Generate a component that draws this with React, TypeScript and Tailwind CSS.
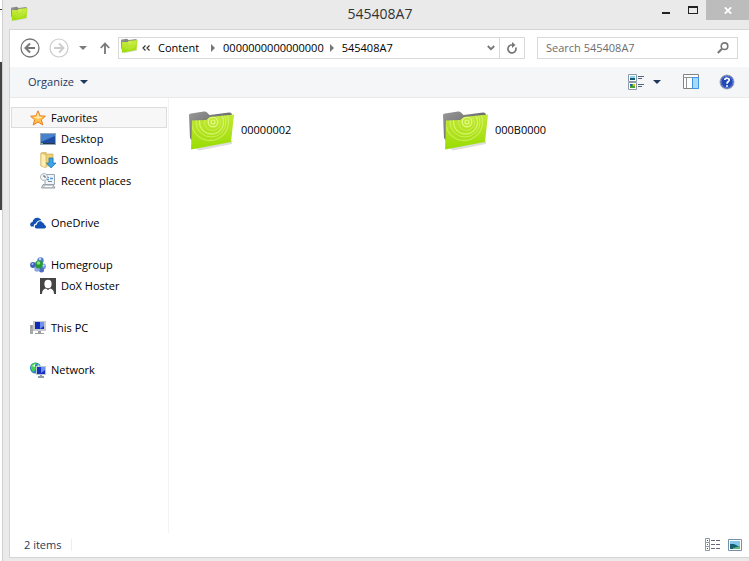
import React, { useId } from 'react'
import { clsx } from 'clsx'

function FolderIcon({ className }: { className?: string }) {
  const id = useId()
  return (
    <svg viewBox="0 0 46 42" className={className} aria-hidden="true">
      <defs>
        <linearGradient id={`${id}-green`} x1="0" y1="0" x2="0" y2="1">
          <stop offset="0" stopColor="#c0e935" />
          <stop offset="0.5" stopColor="#b0e21c" />
          <stop offset="1" stopColor="#98dc04" />
        </linearGradient>
        <linearGradient id={`${id}-grey`} x1="0" y1="0" x2="1" y2="1">
          <stop offset="0" stopColor="#9a9a9a" />
          <stop offset="0.5" stopColor="#707070" />
          <stop offset="1" stopColor="#858585" />
        </linearGradient>
        <clipPath id={`${id}-front`}>
          <path d="M3 10.500 17 10 21 7 45 4.500 42 32 2 39.500Z" />
        </clipPath>
      </defs>
      <path d="M6 38 43 31 43 34 10 40.500Z" fill="#dddddd" />
      <path d="M0 5Q0 3.500 2 3.500L15 1.500Q17 1.300 18 2.500L20.500 5 40 2.500Q42.500 2.300 43 4.500L42 20 4 32 1 28Z" fill={`url(#${id}-grey)`} />
      <path d="M3 10.500 17 10 21 7 45 4.500 42 32 2 39.500Z" fill={`url(#${id}-green)`} />
      <g clipPath={`url(#${id}-front)`} fill="none" stroke="#e6fa88">
        <circle cx="24" cy="12" r="2" strokeWidth="1.200" />
        <circle cx="24" cy="12" r="4.800" strokeWidth="1.400" opacity="0.9" />
        <circle cx="23.500" cy="12.500" r="8" opacity="0.500" />
        <circle cx="22.500" cy="12" r="12" strokeWidth="1.300" opacity="0.700" />
        <circle cx="22" cy="12" r="15" opacity="0.600" />
        <circle cx="21" cy="12" r="18.500" strokeWidth="1.300" opacity="0.500" />
      </g>
    </svg>
  )
}

function StarIcon() {
  return (
    <svg viewBox="0 0 16 16" className="size-4">
      <path d="M8 .8 10 5.800 15.400 6.200 11.300 9.800 12.800 15 8 12 3.200 15 4.600 9.800.6 6.200 6 5.800Z" fill="#ffc04c" stroke="#ec7d22" strokeLinejoin="round" />
      <path d="M8 2.500 9.300 6.500 13 7 8 9 3 7 6.700 6.500Z" fill="#ffe6a2" />
    </svg>
  )
}

function DesktopIcon() {
  return (
    <svg viewBox="0 0 16 16" className="size-4">
      <path d="M0 2H16V14H0Z" fill="#98a8bd" />
      <path d="M1 3H15V12H1Z" fill="#1c4da3" />
      <path d="M1 3H15V5L1 11Z" fill="#4a81cc" />
      <path d="M1 12H15V13H1Z" fill="#26394f" />
      <path d="M1 12H3V13H1Z" fill="#7cc47d" />
    </svg>
  )
}

function DownloadsIcon() {
  return (
    <svg viewBox="0 0 16 16" className="size-4">
      <path d="M1 1 6 0V2H13V14H1Z" fill="#edcf75" stroke="#cfa94c" strokeWidth=".7" />
      <path d="M1 1 6 3V16L1 14Z" fill="#ffefb0" stroke="#d2b05a" strokeWidth=".7" />
      <path d="M9 6H13V11H16L11 16 6.500 11H9Z" fill="#3ba4ea" stroke="#1670b5" strokeWidth=".7" />
    </svg>
  )
}

function RecentIcon() {
  return (
    <svg viewBox="0 0 16 16" className="size-4">
      <path d="M5 1.500H14.500V11.500H5Z" fill="#eef4fa" stroke="#9aa5ae" />
      <path d="M7 4.500H9M8 8.500H12" stroke="#7c8b98" />
      <path d="M7 6.500H9M10 5.500H13" stroke="#4aa0e2" strokeWidth="1.500" />
      <path d="M3 11.500H13L15 15H1.500Z" fill="#c8ced3" stroke="#9aa2a9" />
      <path d="M5 13.500H12" stroke="#fff" />
      <circle cx="4" cy="4" r="3.500" fill="#f6f8fa" stroke="#adb5bb" />
      <path d="M4 2V4H6" fill="none" stroke="#53606b" />
    </svg>
  )
}

function OneDriveIcon() {
  return (
    <svg viewBox="0 0 16 16" className="size-4" fill="#1151b4">
      <path d="M1 11.500C-.5 10 0 7.500 2.500 7 3 4 6 2 9 3.200 10 3.500 11 4.400 11.400 5.300 8.500 5 6.400 6.500 6 8.500 4 8.800 3.500 10.500 4 11.500Z" />
      <path d="M6.500 13.500C4.200 13.500 4.200 9.800 7 9.600 7 6 11.500 5 13 8.300 14 8.200 14.500 8.900 14.400 10 16.600 10.300 16.500 13.500 14.200 13.500Z" />
    </svg>
  )
}

function HomegroupIcon() {
  return (
    <svg viewBox="0 0 16 16" className="size-4">
      <circle cx="10.500" cy="3.500" r="3.200" fill="#547fd1" />
      <circle cx="3" cy="8" r="2.900" fill="#4061bd" />
      <circle cx="13" cy="9.500" r="2.900" fill="#7199de" />
      <circle cx="11.500" cy="13" r="2.500" fill="#4a6cc4" />
      <circle cx="7" cy="12" r="2.700" fill="#8ba8e4" />
      <circle cx="9" cy="7.500" r="4" fill="#259a35" />
      <circle cx="8.500" cy="6" r="1.800" fill="#8fdc8b" />
      <circle cx="10" cy="2" r="1.200" fill="#c6dbfa" />
      <circle cx="2.500" cy="7" r="1" fill="#a9c3f4" />
      <circle cx="13.500" cy="8.500" r="1" fill="#d4e5ff" />
    </svg>
  )
}

function UserIcon() {
  return (
    <svg viewBox="0 0 16 16" className="size-4">
      <path d="M0 0H16V16H0Z" fill="#454545" />
      <path d="M2 16Q2 11 6 10.500L8 12 10 10.500Q14 11 14 16Z" fill="#fff" />
      <ellipse cx="8" cy="6" rx="3.600" ry="4.200" fill="#fff" />
    </svg>
  )
}

function ComputerIcon() {
  return (
    <svg viewBox="0 0 16 16" className="size-4">
      <path d="M0 5H3V14H0Z" fill="#a3aaa9" />
      <path d="M1 6H2V8H1Z" fill="#43bd55" />
      <path d="M3 1H16V11H3Z" fill="#c6cace" />
      <path d="M5 2H14V9H5Z" fill="#1229b5" />
      <path d="M10 2H14V6L10 9Z" fill="#6e91ef" />
      <path d="M8 11H11V13H14V14H5V13H8Z" fill="#999f9f" />
    </svg>
  )
}

function NetworkIcon() {
  return (
    <svg viewBox="0 0 16 16" className="size-4">
      <circle cx="5.500" cy="6" r="5.500" fill="#2385bf" />
      <path d="M1 4Q3 0 7 1L5 4 6 7 3 10 1 7Z" fill="#46cf52" />
      <path d="M8 2 10 4 7 5Z" fill="#a8e7c0" />
      <path d="M2 4 5 2V5Z" fill="#d6f9db" />
      <path d="M6 4H16V13H6Z" fill="#bcc9d2" />
      <path d="M7 5H15V12H7Z" fill="#1730bd" />
      <path d="M11 5H15V8L11 11Z" fill="#6a91f0" />
      <path d="M10 13H12V14H14V16H8V14H10Z" fill="#8d9ca8" />
    </svg>
  )
}

function CaretDown({ className }: { className?: string }) {
  return (
    <svg viewBox="0 0 8 4" className={clsx('h-1 w-2 shrink-0', className)} aria-hidden="true">
      <path d="M0 0H8L4 4Z" fill="currentColor" />
    </svg>
  )
}

function CaretRight() {
  return (
    <svg viewBox="0 0 4 8" className="h-2 w-1 shrink-0 text-[#777777]" aria-hidden="true">
      <path d="M0 0 4 4 0 8Z" fill="currentColor" />
    </svg>
  )
}

function TitleBar() {
  return (
    <header className="flex h-[29px] items-start justify-between">
      <FolderIcon className="mt-1.5 ml-0.5 h-4 w-[17px]" />
      <h1 className="flex-1 pt-1 pl-[82px] text-center text-sm leading-5 text-[#333333]">545408A7</h1>
      <div className="flex h-5">
        <button aria-label="Minimize" className="flex w-7 items-center justify-center pl-1">
          <svg viewBox="0 0 10 10" className="size-2.5"><path d="M1 7H9V9H1Z" fill="#222" /></svg>
        </button>
        <button aria-label="Maximize" className="flex w-7 items-center justify-center pl-0.5">
          <svg viewBox="0 0 10 8" className="h-2 w-2.5"><path d="M0 0H10V8H0ZM1 2V7H9V2Z" fill="#222" fillRule="evenodd" /></svg>
        </button>
        <button aria-label="Close" className="flex w-[43px] items-center justify-center bg-[#bcbcbc]">
          <svg viewBox="0 0 8 7" className="h-[7px] w-2"><path d="M.8.3 7.200 6.700M7.200.3.8 6.700" stroke="#fff" strokeWidth="1.700" /></svg>
        </button>
      </div>
    </header>
  )
}

function AddressBar() {
  return (
    <div className="flex h-[37px] items-center pr-[11px] pb-px pl-2.5">
      <button aria-label="Back" className="text-[#777777]">
        <svg viewBox="0 0 20 20" className="size-5" fill="none" stroke="currentColor">
          <circle cx="10" cy="10" r="9" strokeWidth="1.300" />
          <path d="M15 10H6M10 5.500 5.500 10 10 14.500" strokeWidth="2" />
        </svg>
      </button>
      <button aria-label="Forward" className="ml-[9px] text-[#cccccc]">
        <svg viewBox="0 0 20 20" className="size-5" fill="none" stroke="currentColor">
          <circle cx="10" cy="10" r="9" strokeWidth="1.200" />
          <path d="M5 10H14M10 5.500 14.500 10 10 14.500" strokeWidth="1.800" />
        </svg>
      </button>
      <button aria-label="Recent locations" className="ml-2.5"><CaretDown className="text-[#7b7b7b]" /></button>
      <button aria-label="Up" className="ml-3 text-[#777777]">
        <svg viewBox="0 0 12 12" className="size-3" fill="none" stroke="currentColor" strokeWidth="1.800">
          <path d="M6 12V2M1.800 6 6 1.500 10.200 6" />
        </svg>
      </button>
      <div className="ml-[7px] flex h-[22px] min-w-0 flex-1 items-center border border-[#d9d9d9]">
        <nav aria-label="Address" className="flex min-w-0 flex-1 items-center pl-0.5 whitespace-nowrap">
          <FolderIcon className="mb-1 h-4 w-[17px] shrink-0" />
          <svg viewBox="0 0 8 6" className="ml-1 h-1.5 w-2 shrink-0" fill="none" stroke="#333" strokeWidth="1.200">
            <path d="M3.500.5 1 3 3.500 5.500M7.500.5 5 3 7.500 5.500" />
          </svg>
          <a href="#content" className="mr-3 ml-2">Content</a>
          <CaretRight />
          <a href="#0000000000000000" className="mr-1.5 ml-2">0000000000000000</a>
          <CaretRight />
          <a href="#545408A7" className="ml-2">545408A7</a>
        </nav>
        <button aria-label="Previous locations" className="px-1 text-[#777777]">
          <svg viewBox="0 0 8 6" className="h-1.5 w-2" fill="none" stroke="currentColor" strokeWidth="1.800"><path d="M.8 1 4 4.200 7.200 1" /></svg>
        </button>
        <button aria-label="Refresh" className="flex h-full w-[25px] items-center justify-center border-l border-[#d9d9d9] text-[#777777]">
          <svg viewBox="0 0 12 12" className="size-3" fill="none" stroke="currentColor" strokeWidth="1.700">
            <path d="M6 3H5A4 4 0 1 0 9.700 5.500" />
            <path d="M6 0 9.500 3 6 6Z" fill="currentColor" stroke="none" />
          </svg>
        </button>
      </div>
      <label className="ml-3 flex h-[22px] w-[28%] items-center border border-[#d9d9d9] px-2">
        <input type="search" aria-label="Search 545408A7" placeholder="Search 545408A7" className="min-w-0 flex-1 outline-none placeholder:text-[#6d6d6d]" />
        <svg viewBox="0 0 12 12" className="size-3 text-[#777777]" fill="none" stroke="currentColor">
          <circle cx="7.500" cy="4.200" r="3.300" strokeWidth="1.600" />
          <path d="M5 6.800.8 11" strokeWidth="2" />
        </svg>
      </label>
    </div>
  )
}

function CommandBar() {
  return (
    <div className="flex h-[31px] items-center border-b border-[#e8e9eb] bg-[#f4f6f8] pr-3.5 pl-[18px] text-[#1e395b]">
      <button className="flex items-center gap-1.5">Organize <CaretDown /></button>
      <button aria-label="Change view" className="ml-auto">
        <svg viewBox="0 0 16 16" className="size-4">
          <path d="M.5.5H8.500V7.500H.5ZM.5 8.500H8.500V15.500H.5Z" fill="#fff" stroke="#8a9aac" />
          <path d="M2 2H7V4H2Z" fill="#8dd4f4" /><path d="M2 4H7V6H2Z" fill="#155d72" />
          <path d="M2 10H7V14H2Z" fill="#4c9e31" /><path d="M2 10H4V12H2Z" fill="#245abc" /><path d="M5 10H7V12H5Z" fill="#d5c12b" />
          <path d="M10 2.500H16M10 4.500H14M10 10.500H16M10 12.500H14" stroke="#53657d" />
        </svg>
      </button>
      <button aria-label="More view options" className="ml-[9px]"><CaretDown /></button>
      <button aria-label="Preview pane" className="ml-[22px]">
        <svg viewBox="0 0 16 16" className="size-4">
          <path d="M.5.5H15.500V14.500H.5Z" fill="#fff" stroke="#838383" />
          <path d="M0 3.500H16M3.500 3V14" stroke="#929292" />
          <path d="M9.500 3.500H15.500V14.500H9.500Z" fill="#a9d9fa" stroke="#3e95e5" />
        </svg>
      </button>
      <button aria-label="Help" className="ml-5">
        <svg viewBox="0 0 16 16" className="size-4">
          <circle cx="8" cy="8" r="7" fill="#2146b5" stroke="#a4a8b2" />
          <circle cx="8" cy="8" r="5.800" fill="none" stroke="#5578d5" />
          <path d="M5.800 6C6 3.500 10.500 3.700 10.200 6.200 10 7.500 8 7.700 8 9.700" fill="none" stroke="#fff" strokeWidth="1.700" />
          <circle cx="8" cy="12" r="1" fill="#fff" />
        </svg>
      </button>
    </div>
  )
}

interface TreeItem {
  label: string
  Icon: () => React.JSX.Element
  child?: boolean
  selected?: boolean
}

const TREE: TreeItem[][] = [
  [
    { label: 'Favorites', Icon: StarIcon, selected: true },
    { label: 'Desktop', Icon: DesktopIcon, child: true },
    { label: 'Downloads', Icon: DownloadsIcon, child: true },
    { label: 'Recent places', Icon: RecentIcon, child: true },
  ],
  [{ label: 'OneDrive', Icon: OneDriveIcon }],
  [
    { label: 'Homegroup', Icon: HomegroupIcon },
    { label: 'DoX Hoster', Icon: UserIcon, child: true },
  ],
  [{ label: 'This PC', Icon: ComputerIcon }],
  [{ label: 'Network', Icon: NetworkIcon }],
]

function Sidebar() {
  return (
    <nav aria-label="Locations" className="flex w-[159px] shrink-0 flex-col gap-[21px] border-r border-[#f3f3f3] pt-[9px] pr-px pl-px">
      {TREE.map((group) => (
        <ul key={group[0].label}>
          {group.map(({ label, Icon, child, selected }) => (
            <li key={label}>
              <a
                href={`#${label}`}
                className={clsx(
                  'flex h-[21px] items-center gap-[5px] border',
                  child ? 'pl-7' : 'pl-[18px]',
                  selected ? 'border-[#dcdcdc] bg-[#f7f7f7]' : 'border-transparent',
                )}
              >
                <Icon />
                {label}
              </a>
            </li>
          ))}
        </ul>
      ))}
    </nav>
  )
}

const FOLDERS = ['00000002', '000B0000']

export default function App() {
  return (
    <div className="flex min-h-screen bg-white font-['Open_Sans',sans-serif] text-[11px] leading-4 text-black">
      <div className="flex w-0.5 shrink-0 flex-col">
        <div className="h-[9px]" />
        <div className="h-px bg-[#444444]" />
        <div className="h-[52px]" />
        <div className="h-[148px] bg-[#444444]" />
      </div>
      <div className="flex min-w-0 flex-1 flex-col border-l border-[#cfcfcf] bg-[#eaeaea] pb-[3px] pl-1.5">
        <TitleBar />
        <main className="flex flex-1 flex-col border-y border-l border-[#d5d5d5] bg-white">
          <AddressBar />
          <CommandBar />
          <div className="flex flex-1">
            <Sidebar />
            <ul className="grid flex-1 auto-rows-min grid-cols-[254px_254px] pt-3 pl-5">
              {FOLDERS.map((name) => (
                <li key={name}>
                  <a href={`#${name}`} className="flex items-center gap-1.5">
                    <FolderIcon className="h-[42px] w-[46px]" />
                    <span className="pb-0.5">{name}</span>
                  </a>
                </li>
              ))}
            </ul>
          </div>
          <footer className="flex h-6 items-center pr-[7px] pl-3.5 text-[#1e395b]">
            <span className="border-r border-[#eeeeee] pr-2.5 leading-3">2 items</span>
            <button aria-label="Details view" className="ml-auto">
              <svg viewBox="0 0 16 14" className="h-3.5 w-4">
                <path d="M.5.5H4.500V4.500H.5ZM.5 4.500H4.500V8.500H.5ZM.5 8.500H4.500V12.500H.5Z" fill="#fff" stroke="#8999ac" />
                <path d="M2 2H3V3H2ZM2 10H3V11H2Z" fill="#285c9e" /><path d="M2 6H3V7H2Z" fill="#c33" />
                <path d="M6 2.500H10M11 2.500H15M6 6.500H10M11 6.500H15M6 10.500H10M11 10.500H15" stroke="#66667a" />
              </svg>
            </button>
            <button aria-label="Thumbnail view" className="ml-[7px]">
              <svg viewBox="0 0 14 12" className="h-3 w-3.5">
                <path d="M.5.5H13.500V11.500H.5Z" fill="#fff" stroke="#7790aa" />
                <path d="M2 2H12V10H2Z" fill="#84c8ed" /><path d="M2 5 6 5 12 8V10H2Z" fill="#176072" /><path d="M5 9 12 7V10H5Z" fill="#62b77b" />
              </svg>
            </button>
          </footer>
        </main>
      </div>
    </div>
  )
}
